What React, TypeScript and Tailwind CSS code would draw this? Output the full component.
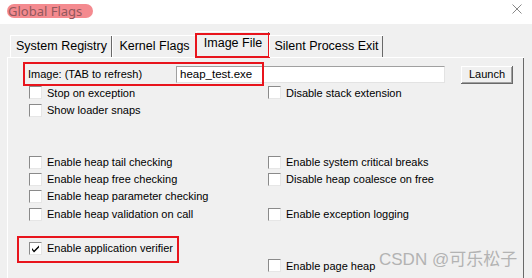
import React from 'react';

const ui = { fontFamily: '"Liberation Sans", Arial, sans-serif' };

type BoxProps = { label: string; checked?: boolean };

const CheckBox = ({ label, checked = false }: BoxProps) => (
  <div className="flex items-center h-[17.3px]">
    <span className="relative w-[13px] h-[13px] bg-white border border-t-[#8a8a8a] border-l-[#8a8a8a] border-r-[#e6e6e6] border-b-[#e6e6e6] shrink-0">
      {checked && (
        <svg viewBox="0 0 11 11" className="absolute inset-0 w-[11px] h-[11px]">
          <path d="M2 5 L4 7.5 L9 2.5 L9 4.5 L4 9.5 L2 7 Z" fill="#000" />
        </svg>
      )}
    </span>
    <span className="ml-[5px] text-[11px] text-black whitespace-nowrap">{label}</span>
  </div>
);

const Tab = ({ label, width, selected = false }: { label: string; width: string; selected?: boolean }) => (
  <div
    className={
      'relative flex items-center justify-center bg-[#f0f0f0] border-t border-l border-white shadow-[inset_-1px_0_#696969] text-[12.5px] text-black ' +
      width +
      (selected ? ' h-[26px] pb-[2px]' : ' h-[22px]')
    }
  >
    {label}
    {selected && <div className="absolute left-[-2px] right-[-1px] top-[1px] h-[25px] border-2 border-[#e8141c]" />}
  </div>
);

const App = () => {
  return (
    <div className="w-[532px] h-[278px] overflow-hidden bg-[#f0f0f0] flex flex-col relative" style={ui}>
      {/* title bar */}
      <div className="h-[24px] bg-white flex items-start justify-between shrink-0">
        <span
          className="mt-[4px] ml-[7px] h-[14px] pl-[1px] pr-[11px] rounded-full bg-[#f48a8f] text-[#92585c] text-[13px] leading-[14px]"
          style={{ fontFamily: '"Noto Sans", "Liberation Sans", sans-serif' }}
        >
          Global Flags
        </span>
        <svg viewBox="0 0 10 10" className="w-[10px] h-[10px] mt-[4px] mr-[10px]">
          <path d="M0.5 0.5 L9.5 9.5 M9.5 0.5 L0.5 9.5" stroke="#7a7a7a" strokeWidth="0.9" />
        </svg>
      </div>

      <div className="flex-1 pl-[7px] pr-[8px] pt-[7px] flex flex-col">
        {/* tabs */}
        <div className="flex items-end pl-[3px] h-[26px]">
          <Tab label="System Registry" width="w-[102px]" />
          <Tab label="Kernel Flags" width="w-[84px]" />
          <Tab label="Image File" width="w-[73px]" selected />
          <Tab label="Silent Process Exit" width="w-[114px]" />
        </div>

        {/* panel */}
        <div className="flex-1 border-t border-l border-white shadow-[inset_-1px_0_#696969] pt-[8px]">
          <div className="relative flex items-center h-[17px] text-[11px]">
            <span className="ml-[20px] w-[148px] whitespace-nowrap">Image: (TAB to refresh)</span>
            <div className="w-[269px] h-[17px] bg-white border border-t-[#a0a0a0] border-l-[#a0a0a0] border-r-[#e3e3e3] border-b-[#e3e3e3] flex items-center pl-[3px] text-[11.5px]">
              heap_test.exe
            </div>
            <button className="ml-[16px] w-[52px] h-[18px] bg-[#f0f0f0] text-[11px] shadow-[inset_-1px_-1px_#696969,inset_1px_1px_#fff,inset_-2px_-2px_#a0a0a0]">
              Launch
            </button>
            <div className="absolute left-[15px] top-[-4px] w-[241px] h-[24px] border-2 border-[#e8141c]" />
          </div>

          <div className="mt-[1.3px] grid grid-cols-[239px_1fr] pl-[21px]">
            <CheckBox label="Stop on exception" />
            <CheckBox label="Disable stack extension" />
            <CheckBox label="Show loader snaps" />
            <div />
            <div className="h-[17.3px]" />
            <div />
            <div className="h-[17.3px]" />
            <div />
            <CheckBox label="Enable heap tail checking" />
            <CheckBox label="Enable system critical breaks" />
            <CheckBox label="Enable heap free checking" />
            <CheckBox label="Disable heap coalesce on free" />
            <CheckBox label="Enable heap parameter checking" />
            <div />
            <CheckBox label="Enable heap validation on call" />
            <CheckBox label="Enable exception logging" />
            <div className="h-[17.3px]" />
            <div />
            <div className="relative">
              <CheckBox label="Enable application verifier" checked />
              <div className="absolute left-[-12px] top-[-4px] w-[162px] h-[27px] border-2 border-[#e8141c]" />
            </div>
            <div />
            <div />
            <CheckBox label="Enable page heap" />
          </div>
        </div>
      </div>

      {/* watermark */}
      <div
        className="absolute left-[379px] top-[247px] text-[17px] text-[#b3b3b3] whitespace-nowrap"
        style={{ fontFamily: '"Liberation Sans", "Noto Sans CJK SC", sans-serif' }}
      >
        CSDN @可乐松子
      </div>
    </div>
  );
};

export default App;
